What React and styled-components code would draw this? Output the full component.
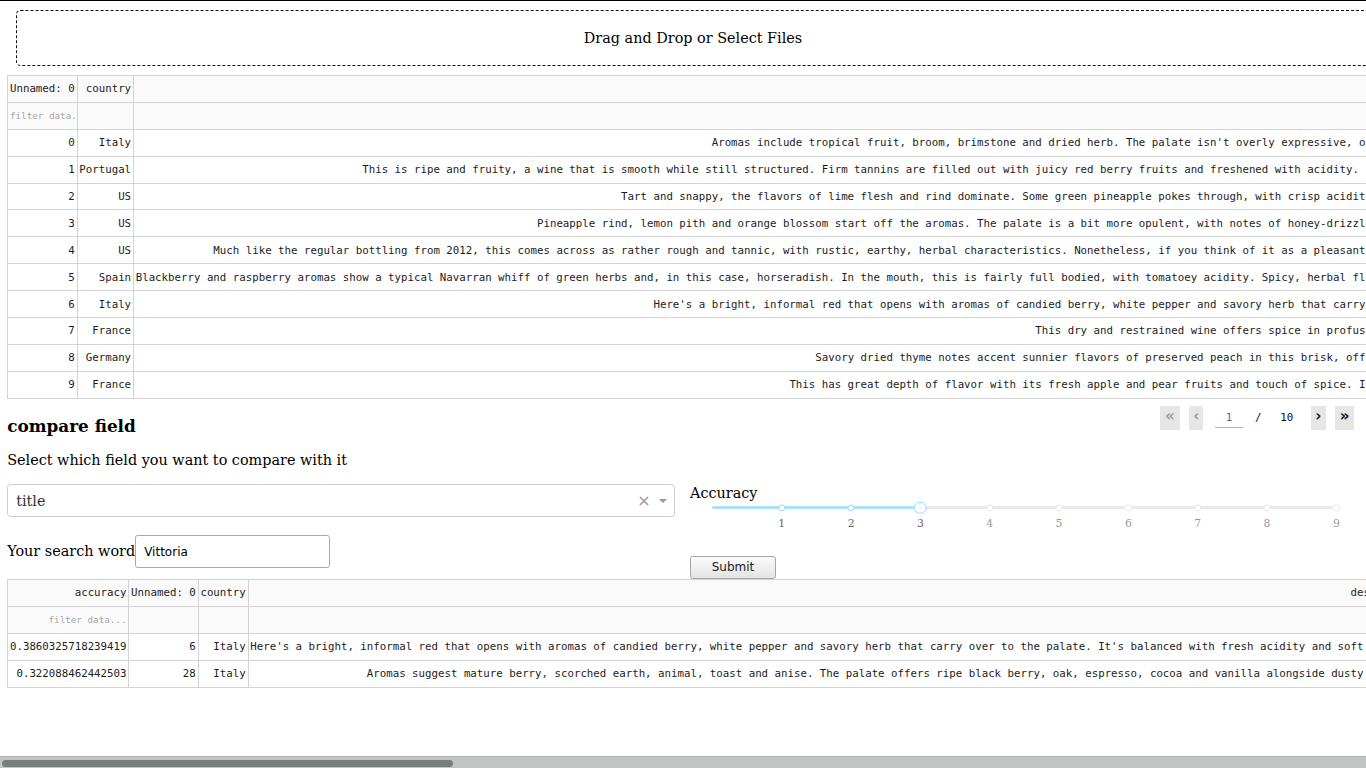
import React from "react";
import styled, { createGlobalStyle } from "styled-components";

const mono = `"DejaVu Sans Mono", monospace`;
const serif = `"DejaVu Serif", serif`;
const sans = `"DejaVu Sans", sans-serif`;

const columns = [
  "Unnamed: 0",
  "country",
  "description",
  "designation",
  "points",
  "price",
  "province",
  "region_1",
  "region_2",
  "taster_name",
  "taster_twitter_handle",
  "title",
  "variety",
  "winery",
];

const wines = [
  [0, "Italy", "Aromas include tropical fruit, broom, brimstone and dried herb. The palate isn't overly expressive, offering unripened apple, citrus and dried sage alongside brisk acidity.", "Vulkà Bianco", 87, "", "Sicily & Sardinia", "Etna", "", "Kerin O’Keefe", "@kerinokeefe", "Nicosia 2013 Vulkà Bianco  (Etna)", "White Blend", "Nicosia"],
  [1, "Portugal", "This is ripe and fruity, a wine that is smooth while still structured. Firm tannins are filled out with juicy red berry fruits and freshened with acidity. It's  already drinkable, although it will certainly be better from 2016.", "Avidagos", 87, 15, "Douro", "", "", "Roger Voss", "@vossroger", "Quinta dos Avidagos 2011 Avidagos Red (Douro)", "Portuguese Red", "Quinta dos Avidagos"],
  [2, "US", "Tart and snappy, the flavors of lime flesh and rind dominate. Some green pineapple pokes through, with crisp acidity underscoring the flavors. The wine was all stainless-steel fermented.", "", 87, 14, "Oregon", "Willamette Valley", "Willamette Valley", "Paul Gregutt", "@paulgwine ", "Rainstorm 2013 Pinot Gris (Willamette Valley)", "Pinot Gris", "Rainstorm"],
  [3, "US", "Pineapple rind, lemon pith and orange blossom start off the aromas. The palate is a bit more opulent, with notes of honey-drizzled guava and mango giving way to a slightly astringent, semidry finish.", "Reserve Late Harvest", 87, 13, "Michigan", "Lake Michigan Shore", "", "Alexander Peartree", "", "St. Julian 2013 Reserve Late Harvest Riesling (Lake Michigan Shore)", "Riesling", "St. Julian"],
  [4, "US", "Much like the regular bottling from 2012, this comes across as rather rough and tannic, with rustic, earthy, herbal characteristics. Nonetheless, if you think of it as a pleasantly unfussy country wine, it's a good companion to a hearty winter stew.", "Vintner's Reserve Wild Child Block", 87, 65, "Oregon", "Willamette Valley", "Willamette Valley", "Paul Gregutt", "@paulgwine ", "Sweet Cheeks 2012 Vintner's Reserve Wild Child Block Pinot Noir (Willamette Valley)", "Pinot Noir", "Sweet Cheeks"],
  [5, "Spain", "Blackberry and raspberry aromas show a typical Navarran whiff of green herbs and, in this case, horseradish. In the mouth, this is fairly full bodied, with tomatoey acidity. Spicy, herbal flavors complement dark plum fruit, while the finish is fresh but grabby.", "Ars In Vitro", 87, 15, "Northern Spain", "Navarra", "", "Michael Schachner", "@wineschach", "Tandem 2011 Ars In Vitro Tempranillo-Merlot (Navarra)", "Tempranillo-Merlot", "Tandem"],
  [6, "Italy", "Here's a bright, informal red that opens with aromas of candied berry, white pepper and savory herb that carry over to the palate. It's balanced with fresh acidity and soft tannins.", "Belsito", 87, 16, "Sicily & Sardinia", "Vittoria", "", "Kerin O’Keefe", "@kerinokeefe", "Terre di Giurfo 2013 Belsito Frappato (Vittoria)", "Frappato", "Terre di Giurfo"],
  [7, "France", "This dry and restrained wine offers spice in profusion. Balanced with acidity and a firm texture, it's very much for food.", "", 87, 24, "Alsace", "Alsace", "", "Roger Voss", "@vossroger", "Trimbach 2012 Gewurztraminer (Alsace)", "Gewürztraminer", "Trimbach"],
  [8, "Germany", "Savory dried thyme notes accent sunnier flavors of preserved peach in this brisk, off-dry wine. It's fruity and fresh, with an elegant, sprightly footprint.", "Shine", 87, 12, "Rheinhessen", "", "", "Anna Lee C. Iijima", "", "Heinz Eifel 2013 Shine Gewürztraminer (Rheinhessen)", "Gewürztraminer", "Heinz Eifel"],
  [9, "France", "This has great depth of flavor with its fresh apple and pear fruits and touch of spice. It's off dry while balanced with acidity for a crisp texture. Drink now.", "Les Natures", 87, 27, "Alsace", "Alsace", "", "Roger Voss", "@vossroger", "Jean-Baptiste Adam 2012 Les Natures Pinot Gris (Alsace)", "Pinot Gris", "Jean-Baptiste Adam"],
];

const matches = [
  ["0.3860325718239419", ...wines[6]],
  ["0.322088462442503", 28, "Italy", "Aromas suggest mature berry, scorched earth, animal, toast and anise. The palate offers ripe black berry, oak, espresso, cocoa and vanilla alongside dusty tannins.", "Iris", 87, 29, "Sicily & Sardinia", "Cerasuolo di Vittoria", "", "Kerin O’Keefe", "@kerinokeefe", "Feudi del Pisciotto 2010 Iris  (Cerasuolo di Vittoria)", "Red Blend", "Feudi del Pisciotto"],
];

const marks = [1, 2, 3, 4, 5, 6, 7, 8, 9];
const sliderMax = 9;
const sliderValue = 3;

function DataTable({ cols, rows }) {
  return (
    <Table>
      <thead>
        <tr>
          {cols.map((c) => (
            <HeadCell key={c}>{c}</HeadCell>
          ))}
        </tr>
        <tr>
          {cols.map((c, i) => (
            <FilterCell key={c}>
              {i === 0 && <FilterInput placeholder="filter data..." />}
            </FilterCell>
          ))}
        </tr>
      </thead>
      <tbody>
        {rows.map((r, ri) => (
          <tr key={ri}>
            {r.map((v, ci) => (
              <Cell key={ci}>{v}</Cell>
            ))}
          </tr>
        ))}
      </tbody>
    </Table>
  );
}

function Slider() {
  const pct = (v) => `${(v / sliderMax) * 100}%`;
  return (
    <SliderBox>
      <Rail />
      <Track style={{ width: pct(sliderValue) }} />
      {marks.map((m) =>
        m === sliderValue ? null : (
          <Dot key={m} $active={m < sliderValue} style={{ left: pct(m) }} />
        )
      )}
      <Handle style={{ left: pct(sliderValue) }} />
      {marks.map((m) => (
        <Mark key={m} $active={m <= sliderValue} style={{ left: pct(m) }}>
          {m}
        </Mark>
      ))}
    </SliderBox>
  );
}

export default function App() {
  return (
    <Page>
      <GlobalStyle />
      <Viewport>
        <Content>
          <DropZone>Drag and Drop or Select Files</DropZone>
          <DataTable cols={columns} rows={wines} />

          <HeadRow>
            <Heading>compare field</Heading>
            <Pager>
              <PageButton $w={20} disabled>«</PageButton>
              <PageButton $w={14} $gap={9.3} disabled>‹</PageButton>
              <PageInput defaultValue="1" />
              <PageText $gap={11.8}>/</PageText>
              <PageText $gap={18.7}>10</PageText>
              <PageButton $w={15} $gap={17.4}>›</PageButton>
              <PageButton $w={19} $gap={9.3}>»</PageButton>
            </Pager>
          </HeadRow>

          <Prompt>Select which field you want to compare with it</Prompt>

          <Controls>
            <LeftCol>
              <Select>
                <SelectValue>title</SelectValue>
                <ClearX>×</ClearX>
                <Caret />
              </Select>
              <SearchRow>
                <span>Your search word</span>
                <SearchInput defaultValue="Vittoria" />
              </SearchRow>
            </LeftCol>
            <RightCol>
              <SliderLabel>Accuracy</SliderLabel>
              <Slider />
              <SubmitButton>Submit</SubmitButton>
            </RightCol>
          </Controls>

          <DataTable cols={["accuracy", ...columns]} rows={matches} />
        </Content>
      </Viewport>
      <ScrollTrack>
        <ScrollThumb />
      </ScrollTrack>
    </Page>
  );
}

const GlobalStyle = createGlobalStyle`
  html {
    border-top: 1px solid #000;
  }
  body {
    margin: 0;
    font-family: ${serif};
    font-size: 14.4px;
    color: #000;
    background: #fff;
  }
`;

const Page = styled.div`
  display: flex;
  flex-direction: column;
  height: calc(100vh - 1px);
`;

const Viewport = styled.div`
  flex: 1;
  min-height: 0;
  overflow: hidden;
`;

const Content = styled.div`
  margin: 0 7.2px;
  padding-bottom: 7.2px;
`;

const ScrollTrack = styled.div`
  height: 12px;
  box-sizing: border-box;
  padding: 3px 2px 0;
  border-top: 1px solid #adadad;
  background: #c3c4c4;
`;

const ScrollThumb = styled.div`
  width: 451px;
  height: 6.5px;
  border-radius: 4px;
  background: #7a7d7d;
`;

const DropZone = styled.div`
  width: 100%;
  height: 54px;
  line-height: 54px;
  margin: 9px;
  border: 1px dashed #111;
  border-radius: 4.5px;
  text-align: center;
`;

const Table = styled.table`
  border-collapse: collapse;
  font-family: ${mono};
  font-size: 10.75px;
  color: #1c1c1c;
`;

const Cell = styled.td`
  height: 25.9px;
  padding: 0 1.8px;
  border: 1px solid #d3d3d3;
  text-align: right;
  white-space: nowrap;
  background: #fff;
`;

const HeadCell = styled(Cell).attrs({ as: "th" })`
  font-weight: normal;
  background: #fafafa;
`;

const FilterCell = styled(HeadCell)``;

const FilterInput = styled.input`
  display: block;
  width: 100%;
  box-sizing: border-box;
  padding: 0;
  border: none;
  outline: none;
  background: transparent;
  font-family: ${mono};
  font-size: 9.25px;
  text-align: right;

  &::placeholder {
    color: #a8a8a8;
  }
`;

const HeadRow = styled.div`
  display: flex;
  justify-content: space-between;
  align-items: flex-start;
`;

const Heading = styled.h3`
  margin: 16.85px 0;
  font-size: 16.85px;
  font-weight: bold;
`;

const Pager = styled.div`
  display: flex;
  align-items: center;
  margin: 7.2px 4.8px 0 0;
  font-family: ${mono};
  font-size: 10.8px;
`;

const PageButton = styled.button`
  width: ${(p) => p.$w}px;
  height: 24px;
  margin-left: ${(p) => p.$gap || 0}px;
  padding: 0 0 2px;
  border: none;
  background: #e6e6e6;
  font-family: ${sans};
  font-size: 15px;
  font-weight: bold;
  line-height: 1;
  color: #1a1a1a;

  &:disabled {
    color: #9e9e9e;
  }
`;

const PageInput = styled.input`
  width: 28.4px;
  height: 20px;
  margin-left: 11.7px;
  padding: 0;
  border: none;
  border-bottom: 1px solid #b4b4b4;
  outline: none;
  background: transparent;
  text-align: center;
  font-family: ${mono};
  font-size: 10.8px;
  color: #4b6f8f;
`;

const PageText = styled.span`
  margin-left: ${(p) => p.$gap}px;
  color: #111;
`;

const Prompt = styled.div`
  margin-bottom: 16px;
`;

const Controls = styled.div`
  display: flex;
  align-items: flex-start;
  gap: 14.8px;
`;

const LeftCol = styled.div`
  width: 668px;
  flex-shrink: 0;
`;

const RightCol = styled.div`
  flex: 1;
`;

const Select = styled.div`
  display: flex;
  align-items: center;
  height: 32.4px;
  box-sizing: border-box;
  padding-left: 8px;
  border: 1px solid #ccc;
  border-radius: 3.6px;
  color: #333;
`;

const SelectValue = styled.span`
  flex: 1;
`;

const ClearX = styled.span`
  width: 15.3px;
  font-family: ${sans};
  font-size: 16px;
  line-height: 1;
  color: #999;
  text-align: center;
`;

const Caret = styled.span`
  width: 22.5px;
  display: flex;
  justify-content: center;

  &::before {
    content: "";
    border-style: solid;
    border-width: 4.5px 4.5px 0;
    border-color: #999 transparent transparent;
  }
`;

const SearchRow = styled.div`
  display: flex;
  align-items: baseline;
  margin-top: 18.6px;
`;

const SearchInput = styled.input`
  width: 195px;
  height: 32.4px;
  box-sizing: border-box;
  padding: 0 8px;
  border: 1px solid #a9a9a9;
  border-radius: 2.7px;
  font-family: ${sans};
  font-size: 12px;
  color: #000;
`;

const SliderLabel = styled.div`
  margin-top: 0.6px;
`;

const SliderBox = styled.div`
  position: relative;
  height: 13.2px;
  margin: 0 22.5px;
`;

const Rail = styled.div`
  position: absolute;
  left: 0;
  right: 0;
  top: 50%;
  height: 3.6px;
  margin-top: -1.8px;
  border-radius: 3px;
  background: #e9e9e9;
`;

const Track = styled(Rail)`
  right: auto;
  background: #abe2fb;
`;

const Dot = styled.span`
  position: absolute;
  top: 50%;
  width: 7.2px;
  height: 7.2px;
  box-sizing: border-box;
  border: 1.8px solid ${(p) => (p.$active ? "#96dbfa" : "#e9e9e9")};
  border-radius: 50%;
  background: #fff;
  transform: translate(-50%, -50%);
`;

const Handle = styled(Dot)`
  width: 12.6px;
  height: 12.6px;
  border-color: #96dbfa;
`;

const Mark = styled.span`
  position: absolute;
  top: 16px;
  transform: translateX(-50%);
  font-size: 10.8px;
  line-height: 13px;
  color: ${(p) => (p.$active ? "#666" : "#999")};
`;

const SubmitButton = styled.button`
  display: block;
  width: 86px;
  height: 23.5px;
  margin-top: 41.4px;
  padding: 0;
  border: 1px solid #a6a6a6;
  border-radius: 2.7px;
  background: linear-gradient(#fbfbfb, #e3e3e3);
  font-family: ${sans};
  font-size: 12px;
  color: #222;
`;
